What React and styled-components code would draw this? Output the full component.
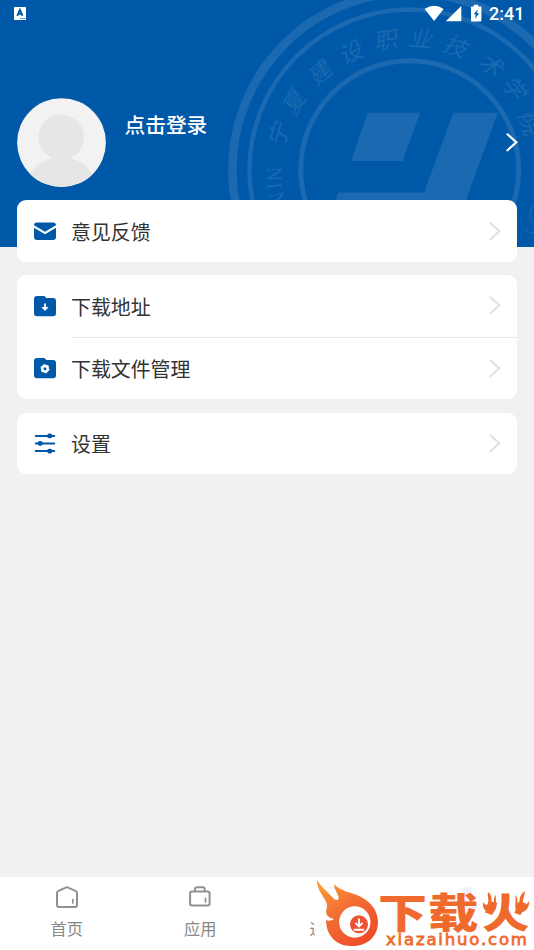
import React from "react";
import styled, { createGlobalStyle } from "styled-components";

const BLUE = "#0059a8";

const GlobalStyle = createGlobalStyle`
  * { box-sizing: border-box; }
  body {
    margin: 0;
    background: #f1f1f1;
    font-family: Roboto, "Noto Sans CJK SC", sans-serif;
  }
`;

const Screen = styled.div`
  display: flex;
  flex-direction: column;
  width: 534px;
  height: 950px;
  overflow: hidden;
  background: #f1f1f1;
`;

const Header = styled.header`
  position: relative;
  flex: none;
  height: 247px;
  overflow: hidden;
  background: ${BLUE};
  color: #fff;
`;

const Seal = styled.svg`
  position: absolute;
  inset: 0;
  font-family: "Noto Sans CJK SC", sans-serif;
`;

const StatusBar = styled.div`
  position: relative;
  display: flex;
  align-items: center;
  justify-content: space-between;
  height: 27px;
  padding: 0 10px 0 13px;
`;

const StatusGroup = styled.div`
  display: flex;
  align-items: center;
`;

const Clock = styled.time`
  width: 35px;
  margin-left: 7px;
  font: 500 18px/27px Roboto, sans-serif;
  white-space: nowrap;
`;

const Profile = styled.div`
  position: relative;
  display: flex;
  align-items: flex-start;
  height: 89px;
  margin: 71px 16px 0 17px;
`;

const LoginTitle = styled.h1`
  flex: 1;
  margin: 11px 0 0 18.5px;
  font: 500 20.7px/30px "Noto Sans CJK SC", sans-serif;
`;

const ProfileArrow = styled.div`
  display: flex;
  align-items: center;
  height: 88px;
`;

const Menu = styled.main`
  position: relative;
  display: flex;
  flex: 1;
  flex-direction: column;
  gap: 13.4px;
  margin-top: -46.6px;
  padding: 0 17px;
`;

const Card = styled.section`
  overflow: hidden;
  border-radius: 9px;
  background: #fff;
`;

const Row = styled.div`
  display: flex;
  height: ${(p) => (p.$divided ? "62.4px" : "61.5px")};
  padding-left: 17px;
`;

const RowIcon = styled.div`
  display: flex;
  align-items: center;
  width: 37px;

  svg { margin-bottom: 1px; }
`;

const RowBody = styled.div`
  display: flex;
  flex: 1;
  align-items: center;
  justify-content: space-between;
  padding-right: 16px;
  border-bottom: ${(p) => (p.$divided ? "1px solid #e5e7ea" : "0")};
  color: #333;
  font: 400 19.9px/30px "Noto Sans CJK SC", sans-serif;

  svg { margin-bottom: 1px; }
`;

const RowLabel = styled.span`
  padding-top: 1.4px;
`;

const TabBar = styled.nav`
  position: relative;
  display: grid;
  flex: none;
  grid-template-columns: repeat(4, 1fr);
  height: 73px;
  background: #fff;
`;

const Tab = styled.div`
  display: flex;
  flex-direction: column;
  align-items: center;
  padding-top: 8px;
  color: #888;
  font: 400 16.2px/24px "Noto Sans CJK SC", sans-serif;
`;

const TabLabel = styled.span`
  margin-top: 7px;
`;

const Watermark = styled.svg`
  position: absolute;
  top: 1px;
  right: 0;
`;

const sealGlyphs = [
  ["宁", 279, 133, -74], ["夏", 295, 101, -59], ["建", 321, 72, -42],
  ["设", 352, 52, -26], ["职", 387, 40, -10], ["业", 422, 39, 5],
  ["技", 457, 47, 21], ["术", 492, 66, 38], ["学", 515, 89, 53],
  ["院", 530, 125, 70],
];

const latinGlyphs = [["N", 274, 174, 88], ["I", 274, 186, 83], ["N", 277, 199, 77], ["G", 281, 216, 71]];

function SealArt() {
  return (
    <Seal width="534" height="247" viewBox="0 0 534 247">
      <g fill="none" stroke="#1b69b1">
        <circle cx="409.7" cy="169.8" r="177.4" strokeWidth="8.6" />
        <circle cx="409.7" cy="169.8" r="160.2" strokeWidth="4.5" />
        <circle cx="409.7" cy="169.8" r="109" strokeWidth="5" />
      </g>
      <g fill="#1b69b1">
        <path d="M367.7 112.7H420L402.7 161H351Z" />
        <path d="M453.3 112.7H497.7L449 247H318L338.5 192.4H424Z" />
      </g>
      <g fill="#1b69b1" textAnchor="middle" fontSize="25" fontWeight="400">
        {sealGlyphs.map(([c, x, y, r]) => (
          <text key={c} transform={`translate(${x} ${y}) rotate(${r}) skewX(-14) scale(.94 .9)`} y="9">{c}</text>
        ))}
      </g>
      <g fill="#1b69b1" textAnchor="middle" fontSize="22" fontFamily="Liberation Serif, serif">
        {latinGlyphs.map(([c, x, y, r], i) => (
          <text key={i} transform={`translate(${x} ${y}) rotate(${r}) scale(.9 1)`} y="7">{c}</text>
        ))}
      </g>
      <g fill="none" stroke="#1762ad" strokeWidth="1.6" strokeLinecap="round">
        <path d="M519 118Q526 112 536 114M533 206Q528 214 531 222M526 229Q528 234 536 233" />
      </g>
    </Seal>
  );
}

const InputIcon = () => (
  <svg width="14" height="15" viewBox="0 0 14 15">
    <rect x="1" y="1" width="12" height="13" rx=".6" fill="#fff" />
    <path d="M4.3 9.8 6.9 3.8 9.5 9.8M5.2 7.9H8.7" fill="none" stroke={BLUE} strokeWidth="1.8" />
    <path d="M7 12.5H12.3" stroke={BLUE} strokeWidth=".8" strokeDasharray="1.3 .6" />
  </svg>
);

const SystemIcons = () => (
  <svg width="58" height="20" viewBox="424 3.4 58 20" fill="#fff">
    <path d="M424.6 8.5Q434.1 1.7 443.6 8.5L434.1 20.3Z" />
    <path d="M461.3 5.4V20.7H445.8Z" />
    <path d="M473.8 4.1H478.3V5.8H480.6Q481.4 5.8 481.4 6.6V20Q481.4 20.9 480.6 20.9H471.7Q471 20.9 471 20V6.6Q471 5.8 471.7 5.8H473.8Z" />
    <path d="M478 8.6 473.6 13.6H475.8L475 18.2 479.2 12.7H476.8Z" fill={BLUE} />
  </svg>
);

const Avatar = () => (
  <svg width="89" height="89" viewBox="0 0 89 89">
    <defs>
      <clipPath id="avatar-circle"><circle cx="44.5" cy="44.6" r="44.4" /></clipPath>
    </defs>
    <g clipPath="url(#avatar-circle)">
      <rect width="89" height="89" fill="#f2f2f2" />
      <circle cx="44.2" cy="39.3" r="22.8" fill="#e6e6e6" />
      <ellipse cx="44.2" cy="93" rx="36" ry="34" fill="#e6e6e6" />
    </g>
  </svg>
);

const Chevron = ({ color = "#dee2e8" }) => (
  <svg width="12" height="20" viewBox="0 0 12 20">
    <path d="M1.5 2 10.3 10 1.5 18" transform="translate(0 .3)" fill="none" stroke={color} strokeWidth="2.2" strokeLinecap="round" strokeLinejoin="miter" />
  </svg>
);

const MailIcon = () => (
  <svg width="22" height="24" viewBox="0 0 22 24">
    <path d="M3 3.5H19Q22 3.5 22 6.3L11 12.8 0 6.3Q0 3.5 3 3.5Z" fill={BLUE} />
    <path d="M0 8.7 11 15.3 22 8.7V17.9Q22 20.9 19 20.9H3Q0 20.9 0 17.9Z" fill={BLUE} />
  </svg>
);

const FOLDER = "M3 2H9.5Q10.7 2 11.7 3.2L12.3 3.9H19Q22 3.9 22 6.9V19.3Q22 22.3 19 22.3H3Q0 22.3 0 19.3V5Q0 2 3 2Z";

const DownloadIcon = () => (
  <svg width="22" height="24" viewBox="0 0 22 24">
    <path d={FOLDER} fill={BLUE} />
    <path d="M8 13.4H14L11 16.5Z" fill="#fff" stroke="#fff" strokeWidth=".8" strokeLinejoin="round" />
    <path d="M11 9.4V15" stroke="#fff" strokeWidth="1.8" />
  </svg>
);

const FolderGearIcon = () => (
  <svg width="22" height="24" viewBox="0 0 22 24">
    <path d={FOLDER} fill={BLUE} />
    <circle cx="11" cy="12.7" r="2.7" fill="none" stroke="#fff" strokeWidth="2.4" />
    <circle cx="11" cy="12.7" r="3.9" fill="none" stroke="#fff" strokeWidth="1.2" strokeDasharray="2.1 1.98" />
  </svg>
);

const SettingsIcon = () => (
  <svg width="22" height="24" viewBox="0 0 22 24">
    <path d="M1.8 4.9H20.2M1.8 12.4H20.2M1.8 20.1H20.2" stroke={BLUE} strokeWidth="2" strokeLinecap="round" />
    <g fill={BLUE}>
      <rect x="13.2" y="2.5" width="5" height="4.8" rx="2" />
      <rect x="3.7" y="10" width="5" height="4.8" rx="2" />
      <rect x="13.2" y="17.7" width="5" height="4.8" rx="2" />
    </g>
  </svg>
);

const TabIcon = ({ children }) => (
  <svg width="24" height="24" viewBox="0 0 24 24" fill="none" stroke="#909090" strokeWidth="2" strokeLinejoin="round" strokeLinecap="round">
    {children}
  </svg>
);

const HomeIcon = () => (
  <TabIcon>
    <path d="M12 2.2 20.6 5.9Q22 6.6 22 8.1V20Q22 22 20 22H4Q2 22 2 20V8.1Q2 6.6 3.4 5.9Z" />
    <path d="M17.8 14.5V18" strokeWidth="1.7" />
  </TabIcon>
);

const CaseIcon = () => (
  <TabIcon>
    <rect x="2.1" y="6.4" width="19.5" height="14.2" rx="2" />
    <path d="M7 6V4.4Q7 2.3 9 2.3H14.7Q16.7 2.3 16.7 4.4V6" />
    <path d="M17.5 13.4V17" strokeWidth="1.7" />
  </TabIcon>
);

const ContactsIcon = () => (
  <TabIcon>
    <rect x="3" y="3" width="18" height="19" rx="3" />
    <path d="M8 17H14" />
  </TabIcon>
);

const PersonIcon = () => (
  <TabIcon>
    <circle cx="12" cy="7" r="4" fill={BLUE} stroke={BLUE} />
    <path d="M3 22Q4 14 12 14T21 22Z" fill={BLUE} stroke={BLUE} />
  </TabIcon>
);

function SiteWatermark() {
  return (
    <Watermark width="219" height="72" viewBox="315 878 219 72">
      <defs>
        <linearGradient id="flame" x1="0" y1="0" x2=".7" y2="1">
          <stop offset="0" stopColor="#faa02c" />
          <stop offset=".45" stopColor="#f36b29" />
          <stop offset="1" stopColor="#ef421f" />
        </linearGradient>
      </defs>
      <rect x="315" y="878" width="219" height="72" fill="#fff" opacity=".93" />
      <g opacity=".95">
        <path d="M317 880C322 888 329 893 334 899C337 901 340 900 338 895C336 891 334 888 334 884C341 892 352 892 361 897C371 902 378 911 378 922C378 937 366 947 351 946C336 946 326 935 326 920C328 921 332 921 334 919C326 917 325 913 327 907C328 899 317 893 317 880Z" fill="url(#flame)" />
        <circle cx="354.8" cy="922" r="15.7" fill="#fff" />
        <circle cx="359" cy="924.3" r="9" fill="#ef482a" />
        <path d="M359 918.5V926M355.4 922.8 359 926.4 362.6 922.8M353.8 929.7H364.2" fill="none" stroke="#fff" strokeWidth="1.9" />
        <g fill="#f16322" fontFamily="Noto Sans CJK SC, sans-serif" fontWeight="900" fontSize="48">
          <text transform="translate(378 927.5) scale(1.02 .85)">下</text>
          <text transform="translate(428 927.5) scale(1.05 .85)">载</text>
          <text transform="translate(482 927.5) scale(.99 .85)">火</text>
        </g>
        <g fill="#f16322">
          <path d="M488 892C494 897 490 902 492 905C496 902 492 898 496 895C495 902 499 908 493 912C488 915 482 910 483 902C484 904 486 905 487 905C490 901 487 897 488 892Z" />
          <path d="M525 891C517 897 521 901 519 905C516 902 519 898 515 895C517 902 513 908 518 912C524 914 530 908 529 901C527 904 526 905 524 905C521 901 525 896 525 891Z" />
        </g>
        <text transform="translate(386 944.5) scale(1.06 1)" fill="#f16322" stroke="#f16322" strokeWidth=".75" fontFamily="DejaVu Sans, sans-serif" fontSize="15.6" textLength="133" lengthAdjust="spacing">xiazaihuo.com</text>
      </g>
    </Watermark>
  );
}

function MenuRow({ icon, label, divided }) {
  return (
    <Row $divided={divided}>
      <RowIcon>{icon}</RowIcon>
      <RowBody $divided={divided}>
        <RowLabel>{label}</RowLabel>
        <Chevron />
      </RowBody>
    </Row>
  );
}

export default function App() {
  return (
    <>
      <GlobalStyle />
      <Screen>
        <Header>
          <SealArt />
          <StatusBar>
            <InputIcon />
            <StatusGroup>
              <SystemIcons />
              <Clock>2:41</Clock>
            </StatusGroup>
          </StatusBar>
          <Profile>
            <Avatar />
            <LoginTitle>点击登录</LoginTitle>
            <ProfileArrow><Chevron color="#fff" /></ProfileArrow>
          </Profile>
        </Header>
        <Menu>
          <Card>
            <MenuRow icon={<MailIcon />} label="意见反馈" />
          </Card>
          <Card>
            <MenuRow icon={<DownloadIcon />} label="下载地址" divided />
            <MenuRow icon={<FolderGearIcon />} label="下载文件管理" />
          </Card>
          <Card>
            <MenuRow icon={<SettingsIcon />} label="设置" />
          </Card>
        </Menu>
        <TabBar>
          <Tab><HomeIcon /><TabLabel>首页</TabLabel></Tab>
          <Tab><CaseIcon /><TabLabel>应用</TabLabel></Tab>
          <Tab><ContactsIcon /><TabLabel>通讯录</TabLabel></Tab>
          <Tab><PersonIcon /><TabLabel>我</TabLabel></Tab>
          <SiteWatermark />
        </TabBar>
      </Screen>
    </>
  );
}
